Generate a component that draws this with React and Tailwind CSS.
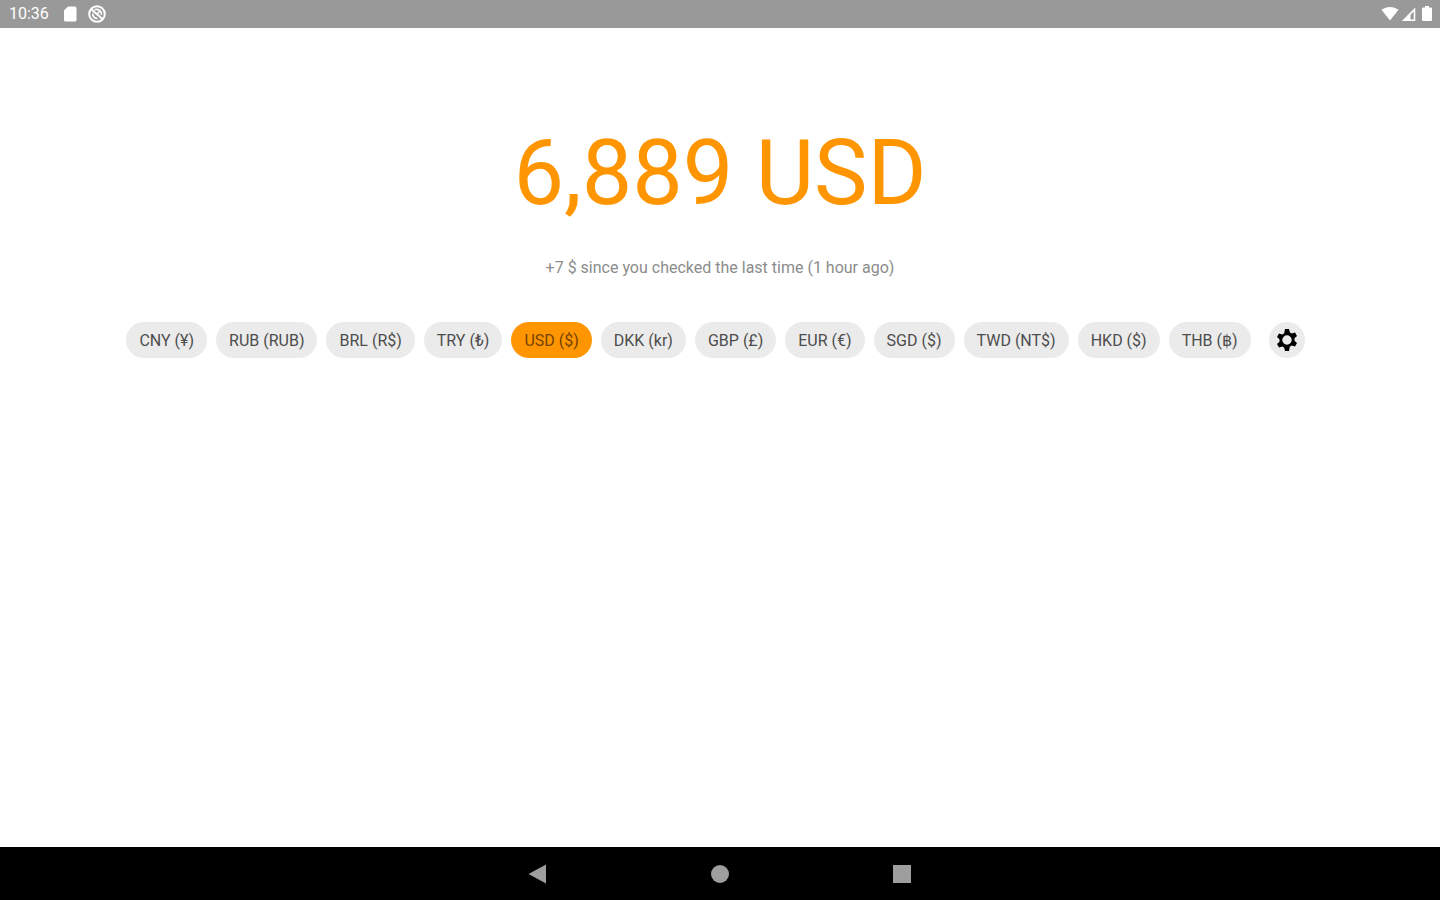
import clsx from "clsx";

const currencies = [
  { code: "CNY", symbol: "¥" },
  { code: "RUB", symbol: "RUB" },
  { code: "BRL", symbol: "R$" },
  { code: "TRY", symbol: "₺" },
  { code: "USD", symbol: "$" },
  { code: "DKK", symbol: "kr" },
  { code: "GBP", symbol: "£" },
  { code: "EUR", symbol: "€" },
  { code: "SGD", symbol: "$" },
  { code: "TWD", symbol: "NT$" },
  { code: "HKD", symbol: "$" },
  { code: "THB", symbol: "฿" },
];

const selected = "USD";

function StatusBar() {
  return (
    <header className="flex h-7 shrink-0 items-center justify-between bg-[#999999] pr-[7px] pl-[9px] text-white">
      <div className="flex items-center">
        <span className="text-base leading-7">10:36</span>
        <svg className="ml-[13px] h-4 w-4" viewBox="0 0 16 16" fill="currentColor" aria-hidden="true">
          <path d="M6 0.500h7a1.500 1.500 0 0 1 1.500 1.500v12a1.500 1.500 0 0 1-1.500 1.500H3.500A1.500 1.500 0 0 1 2 14V4.500z" />
        </svg>
        <svg
          className="ml-2.5 h-[18px] w-[18px]"
          viewBox="0 0 18 18"
          fill="none"
          stroke="currentColor"
          strokeWidth="2"
          aria-hidden="true"
        >
          <circle cx="9" cy="9" r="7.800" />
          <path d="M3.500 4.500l11 9.500" />
          <path d="M6.500 4.800a5 5 0 0 1 7 5M4.800 8.500a4.500 4.500 0 0 0 4.700 5" strokeWidth="1.600" />
          <path d="M9 9l3.500-3.500" strokeWidth="1.600" />
        </svg>
      </div>

      <div className="flex items-center">
        <svg className="h-4 w-[18px]" viewBox="0 0 18 16" fill="currentColor" aria-hidden="true">
          <path d="M9 14.500L0.500 3.800C3 1.900 5.800 0.900 9 0.900s6 1 8.500 2.900z" />
        </svg>
        <svg className="ml-0.5 h-4 w-4" viewBox="0 0 16 16" aria-hidden="true">
          <path d="M13.500 3.500v10.700H2.800z" fill="none" stroke="currentColor" strokeWidth="1.600" />
          <path d="M9.500 7.500v6.700H2.800z" fill="currentColor" />
        </svg>
        <svg className="ml-1 h-4 w-3" viewBox="0 0 12 16" fill="currentColor" aria-hidden="true">
          <path d="M4 0h4v1.500h2a1 1 0 0 1 1 1v11.500a1 1 0 0 1-1 1H2a1 1 0 0 1-1-1V2.500a1 1 0 0 1 1-1h2z" />
        </svg>
      </div>
    </header>
  );
}

function NavigationBar() {
  return (
    <nav className="flex h-[53px] shrink-0 items-center justify-center gap-[142px] bg-black text-[#9e9e9e]">
      <button type="button" aria-label="Back" className="flex h-10 w-10 items-center justify-center">
        <svg className="h-5 w-5" viewBox="0 0 20 20" fill="currentColor">
          <path d="M0.500 10L18 0.500v19z" />
        </svg>
      </button>
      <button type="button" aria-label="Home" className="flex h-10 w-10 items-center justify-center">
        <span className="h-[18px] w-[18px] rounded-full bg-current" />
      </button>
      <button type="button" aria-label="Recent apps" className="flex h-10 w-10 items-center justify-center">
        <span className="h-[18px] w-[18px] bg-current" />
      </button>
    </nav>
  );
}

export default function App() {
  return (
    <div className="flex min-h-screen flex-col bg-white font-[Roboto,sans-serif]">
      <StatusBar />

      <main className="flex flex-1 flex-col items-center pt-[92px]">
        <h1 className="text-[90px] leading-[108px] text-[#ff9500]">6,889 USD</h1>
        <p className="mt-[30px] text-base leading-5 text-[#8c8c8c]">
          +7 $ since you checked the last time (1 hour ago)
        </p>

        <div className="mt-11 flex flex-wrap justify-center gap-[9px]">
          {currencies.map(({ code, symbol }) => (
            <button
              key={code}
              type="button"
              aria-pressed={code === selected}
              className={clsx(
                "h-9 rounded-full px-[13px] pt-0.5 text-base",
                code === selected ? "bg-[#ff9500] text-[#734300]" : "bg-[#ebebeb] text-[#4d4d4d]",
              )}
            >
              {code} ({symbol})
            </button>
          ))}
          <button
            type="button"
            aria-label="Settings"
            className="mx-[9px] flex h-9 w-9 items-center justify-center rounded-full bg-[#ebebeb] text-black"
          >
            <svg className="h-6 w-6" viewBox="0 0 24 24">
              <path
                d="M10 1h4l.8 3.300 1.900 1.100 3.300-1 2 3.500-2.500 2.300v2.600l2.500 2.300-2 3.500-3.300-1-1.900 1.100L14 23h-4l-.8-3.300-1.900-1.100-3.300 1-2-3.500 2.500-2.300v-2.600L2 8.900l2-3.500 3.300 1 1.900-1.100zM12 7.300a4.700 4.700 0 1 0 0 9.400 4.700 4.700 0 0 0 0-9.400z"
                fill="currentColor"
                fillRule="evenodd"
              />
            </svg>
          </button>
        </div>
      </main>

      <NavigationBar />
    </div>
  );
}
